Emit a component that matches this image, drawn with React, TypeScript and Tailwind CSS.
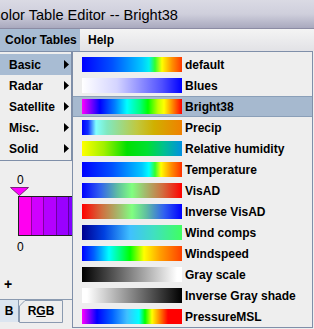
import React from "react";

const tables: { name: string; g: string }[] = [
  { name: "default", g: "bg-[linear-gradient(to_right,#0000ff_0%,#0050ff_30%,#00c8ff_60%,#00f0f0_67%,#30ff30_73%,#ffff00_80%,#ff9000_90%,#ff3800_100%)]" },
  { name: "Blues", g: "bg-[linear-gradient(to_right,#ffffff_0%,#d4d4ff_35%,#5050ff_80%,#0000ff_100%)]" },
  { name: "Bright38", g: "bg-[linear-gradient(to_right,#ff00ff_0%,#0000ff_18%,#0080ff_33%,#00ffff_45%,#00ff80_58%,#00ff00_66%,#c0ff00_76%,#ffff00_82%,#ff9000_90%,#ff0000_100%)]" },
  { name: "Precip", g: "bg-[linear-gradient(to_right,#0000ff_0%,#1030ff_6%,#80ffff_14%,#80e8c0_25%,#a0d880_40%,#c0c840_55%,#d0b000_72%,#f08000_100%)]" },
  { name: "Relative humidity", g: "bg-[linear-gradient(to_right,#ffff00_0%,#a0f000_22%,#00e000_45%,#00e030_65%,#00c090_82%,#0090e0_100%)]" },
  { name: "Temperature", g: "bg-[linear-gradient(to_right,#0000ff_0%,#0050ff_30%,#00c8ff_60%,#00ffff_67%,#30ff30_73%,#ffff00_79%,#ff9000_89%,#ff3000_100%)]" },
  { name: "VisAD", g: "bg-[linear-gradient(to_right,#0000ff_0%,#3060f0_18%,#60c0a0_36%,#80ff80_50%,#a0c070_62%,#d07040_80%,#ff0000_100%)]" },
  { name: "Inverse VisAD", g: "bg-[linear-gradient(to_left,#0000ff_0%,#3060f0_18%,#60c0a0_36%,#80ff80_50%,#a0c070_62%,#d07040_80%,#ff0000_100%)]" },
  { name: "Wind comps", g: "bg-[linear-gradient(to_right,#000090_0%,#0040e0_22%,#40c0ff_48%,#40e0c0_72%,#40ff60_100%)]" },
  { name: "Windspeed", g: "bg-[linear-gradient(to_right,#0000ff_0%,#0060ff_12%,#00ffff_27%,#00ff80_38%,#00ff00_48%,#ffff00_62%,#ffa000_78%,#ff4000_100%)]" },
  { name: "Gray scale", g: "bg-[linear-gradient(to_right,#000000_0%,#ffffff_95%,#ffffff_100%)]" },
  { name: "Inverse Gray shade", g: "bg-[linear-gradient(to_left,#000000_0%,#ffffff_95%,#ffffff_100%)]" },
  { name: "PressureMSL", g: "bg-[linear-gradient(to_right,#ff00ff_0%,#0000ff_15%,#0060ff_30%,#40c0ff_45%,#00ffff_57%,#00ff00_63%,#ffff00_70%,#ff9000_77%,#ff0000_86%,#ff0000_100%)]" },
];

const cats = ["Basic", "Radar", "Satellite", "Misc.", "Solid"];

function Arrow() {
  return (
    <svg width="5" height="9" viewBox="0 0 5 9" className="block">
      <polygon points="0,0 5,4.5 0,9" fill="#000" />
    </svg>
  );
}

export default function App() {
  return (
    <div className="relative w-[314px] h-[329px] overflow-hidden bg-[#eeeeee] font-['Liberation_Sans',Arial,sans-serif] text-black">
      {/* title bar */}
      <div className="h-[29px] border-b border-[#8c8ca4] bg-gradient-to-b from-[#dadae4] via-[#cfcfdc] to-[#a9a9be] flex items-center">
        <span className="ml-[-10px] text-[14.6px] leading-none mt-[2px] whitespace-nowrap">Color Table Editor -- Bright38</span>
      </div>
      {/* menu bar */}
      <div className="h-[22px] flex items-stretch bg-gradient-to-b from-[#f4f4f4] to-[#e2e2e6] text-[12px] font-bold">
        <div className="w-[80px] bg-[#a8bcd3] flex items-center pl-[5px] whitespace-nowrap">Color Tables</div>
        <div className="flex items-center pl-[8px]">Help</div>
      </div>

      {/* editor content underneath */}
      <div className="flex flex-col items-start pt-[123px] text-[12px]">
        <div className="ml-[17px] h-[12px] leading-[12px]">0</div>
        <svg width="19" height="9" viewBox="0 0 19 9" className="ml-[10px] mt-[1px] block">
          <polygon points="0.5,0.5 18.5,0.5 9.5,8.5" fill="#ff00ff" stroke="#802080" strokeWidth="1" />
        </svg>
        <div className="ml-[18px] w-[70px] h-[40px] border border-[#202020] flex">
          <div className="w-[13px] bg-[#ff00f0] border-r border-[#9000a0]" />
          <div className="w-[12px] bg-[#d000ff] border-r border-[#8000a0]" />
          <div className="w-[13px] bg-[#b400ff] border-r border-[#7000a0]" />
          <div className="w-[12px] bg-[#9a00ff] border-r border-[#6000a0]" />
          <div className="flex-1 bg-[#8000ff]" />
        </div>
        <div className="ml-[17px] mt-[5px] h-[12px] leading-[12px]">0</div>
        <div className="ml-[4px] mt-[25px] h-[12px] leading-[12px] font-bold text-[14px]">+</div>
        <div className="mt-[9px] flex items-end h-[23px] w-[72px] border-t border-[#8a9ab0] relative">
          <div className="w-[19px] h-full bg-[#dbe5f0] border-r border-[#8a9ab0] flex items-center justify-center font-bold text-[12px]">B</div>
          <div className="relative w-[44px] h-full flex items-center justify-center font-bold text-[12px]">
            <svg width="44" height="23" viewBox="0 0 44 23" className="absolute inset-0">
              <polygon points="0.5,22.5 0.5,6 6,0.5 43.5,0.5 43.5,22.5" fill="#eeeeee" stroke="#8a9ab0" strokeWidth="1" />
            </svg>
            <span className="relative">R<span className="underline">G</span>B</span>
          </div>
        </div>
      </div>

      {/* left popup */}
      <div className="absolute left-0 top-[51px] w-[72px] border-r border-y border-[#7f8fa9] bg-[#eeeeee] pt-[2px] pb-[1px] text-[12px] font-bold">
        {cats.map((c, i) => (
          <div key={c} className={`h-[21px] flex items-center justify-between pl-[9px] pr-[2px] ${i === 0 ? "bg-[#a8bcd3]" : ""}`}>
            <span>{c}</span>
            <Arrow />
          </div>
        ))}
      </div>

      {/* submenu */}
      <div className="absolute left-[72px] top-[51px] w-[241px] border border-[#7f8fa9] bg-[#eeeeee] pt-[2px] text-[12px] font-bold">
        {tables.map((t) => (
          <div
            key={t.name}
            className={`h-[21px] flex items-center pl-[9px] gap-[3px] whitespace-nowrap ${t.name === "Bright38" ? "bg-[#a6b9cf] border-y border-[#8a9fb8]" : ""}`}
          >
            <div className={`w-[100px] h-[15px] shrink-0 ${t.g}`} />
            <span>{t.name}</span>
          </div>
        ))}
      </div>
    </div>
  );
}
